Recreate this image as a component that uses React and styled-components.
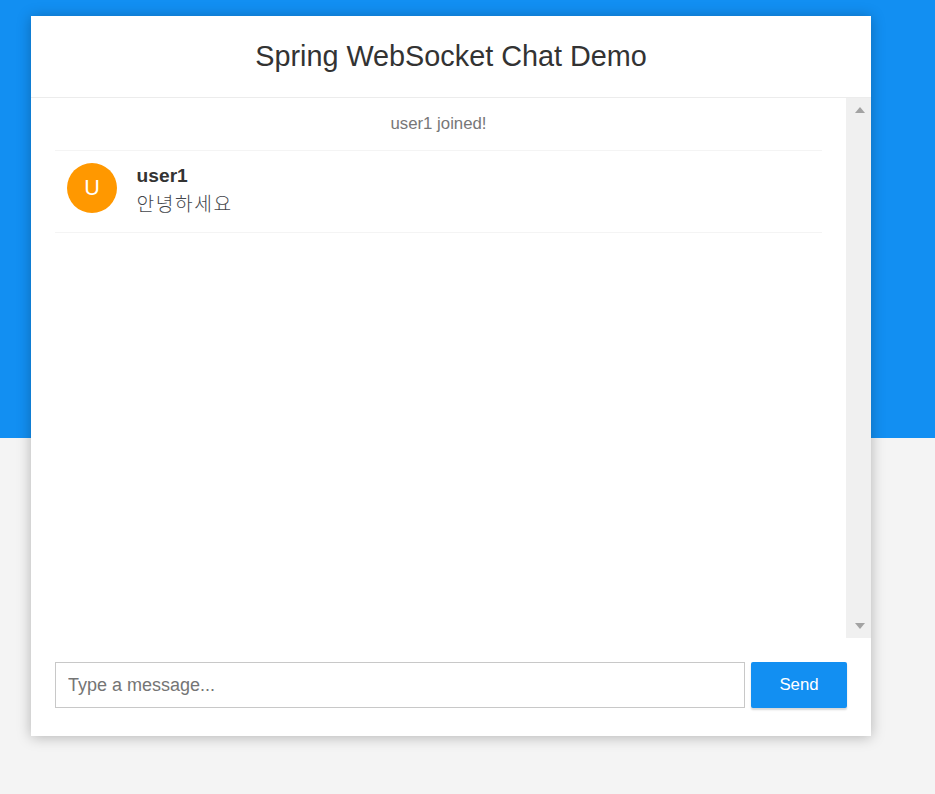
import React from "react";
import styled, { createGlobalStyle } from "styled-components";

const GlobalStyle = createGlobalStyle`
  html, body {
    margin: 0;
    padding: 0;
  }
  body {
    min-height: 794px;
    background: linear-gradient(#128ff2 0, #128ff2 438px, #f4f4f4 438px);
    font-family: "Liberation Sans", Arial, "Noto Sans CJK KR", sans-serif;
    overflow: hidden;
  }
`;

export const Page = styled.div`
  padding-top: 16px;
  padding-left: 31px;
`;

export const ChatContainer = styled.div`
  width: 840px;
  height: 720px;
  background-color: #fff;
  box-shadow: 0 1px 13px rgba(0, 0, 0, 0.27);
  display: flex;
  flex-direction: column;
`;

export const ChatHeader = styled.div`
  height: 81px;
  border-bottom: 1px solid #ececec;
  display: flex;
  justify-content: center;
  align-items: center;
  h2 {
    margin: 0;
    font-size: 28.8px;
    font-weight: 500;
    color: #333;
  }
`;

export const ListArea = styled.div`
  height: 540px;
  display: flex;
`;

export const MessageList = styled.ul`
  list-style-type: none;
  margin: 0;
  padding: 0 24px;
  flex: 1;
`;

export const EventItem = styled.li`
  line-height: 28px;
  padding: 12px 24px;
  border-bottom: 1px solid #f4f4f4;
  text-align: center;
  p {
    margin: 0;
    color: #777;
    font-size: 16.8px;
  }
`;

export const ChatItem = styled.li`
  line-height: 28.8px;
  padding: 12px 24px 14.6px 12px;
  border-bottom: 1px solid #f4f4f4;
  display: flex;
  gap: 19.6px;
`;

export const Avatar = styled.i`
  flex: none;
  width: 50px;
  height: 50px;
  border-radius: 50%;
  background-color: ${(props) => props.color};
  color: #fff;
  font-style: normal;
  font-size: 21.6px;
  line-height: 50px;
  text-align: center;
  text-transform: uppercase;
`;

export const MessageBody = styled.div`
  display: flex;
  flex-direction: column;
  font-size: 19.2px;
  span {
    color: #333;
    font-weight: 700;
    margin-top: -1px;
  }
  p {
    margin: 0;
    color: #43464b;
    font-family: "Noto Sans CJK KR", "Liberation Sans", sans-serif;
    font-weight: 300;
    letter-spacing: 1.6px;
    margin-top: -2px;
  }
`;

export const ScrollBar = styled.div`
  width: 25px;
  background-color: #f0f0f0;
  display: flex;
  flex-direction: column;
  justify-content: space-between;
  align-items: center;
  padding: 9px 0 9px 2px;
  box-sizing: border-box;
`;

export const Arrow = styled.div`
  width: 0;
  height: 0;
  border-left: 5px solid transparent;
  border-right: 5px solid transparent;
  ${(props) =>
    props.down
      ? "border-top: 6px solid #a3a3a3;"
      : "border-bottom: 6px solid #a3a3a3;"}
`;

export const MessageForm = styled.form`
  padding: 24px 24px 28px 24px;
  display: flex;
  gap: 6px;
`;

export const MessageInput = styled.input`
  width: 690px;
  height: 46px;
  box-sizing: border-box;
  border: 1px solid #c8c8c8;
  padding: 0 12px;
  font-family: "Liberation Sans", Arial, sans-serif;
  font-size: 18px;
  color: #333;
  outline: none;
  &::placeholder {
    color: #757575;
  }
`;

export const SendButton = styled.button`
  width: 96px;
  height: 46px;
  border: none;
  border-radius: 2px;
  background-color: #128ff2;
  color: #fff;
  font-family: "Liberation Sans", Arial, sans-serif;
  font-size: 16.8px;
  box-shadow: 0 2px 2px 0 rgba(0, 0, 0, 0.16);
  cursor: pointer;
`;

const messages = [
  { type: "JOIN", sender: "user1" },
  { type: "CHAT", sender: "user1", content: "안녕하세요", color: "#ff9800" },
];

export default function App() {
  return (
    <>
      <GlobalStyle />
      <Page>
        <ChatContainer>
          <ChatHeader>
            <h2>Spring WebSocket Chat Demo</h2>
          </ChatHeader>
          <ListArea>
            <MessageList>
              {messages.map((m, i) =>
                m.type === "JOIN" ? (
                  <EventItem key={i}>
                    <p>{m.sender} joined!</p>
                  </EventItem>
                ) : (
                  <ChatItem key={i}>
                    <Avatar color={m.color}>{m.sender[0]}</Avatar>
                    <MessageBody>
                      <span>{m.sender}</span>
                      <p>{m.content}</p>
                    </MessageBody>
                  </ChatItem>
                )
              )}
            </MessageList>
            <ScrollBar>
              <Arrow />
              <Arrow down />
            </ScrollBar>
          </ListArea>
          <MessageForm onSubmit={(e) => e.preventDefault()}>
            <MessageInput type="text" placeholder="Type a message..." />
            <SendButton type="submit">Send</SendButton>
          </MessageForm>
        </ChatContainer>
      </Page>
    </>
  );
}
